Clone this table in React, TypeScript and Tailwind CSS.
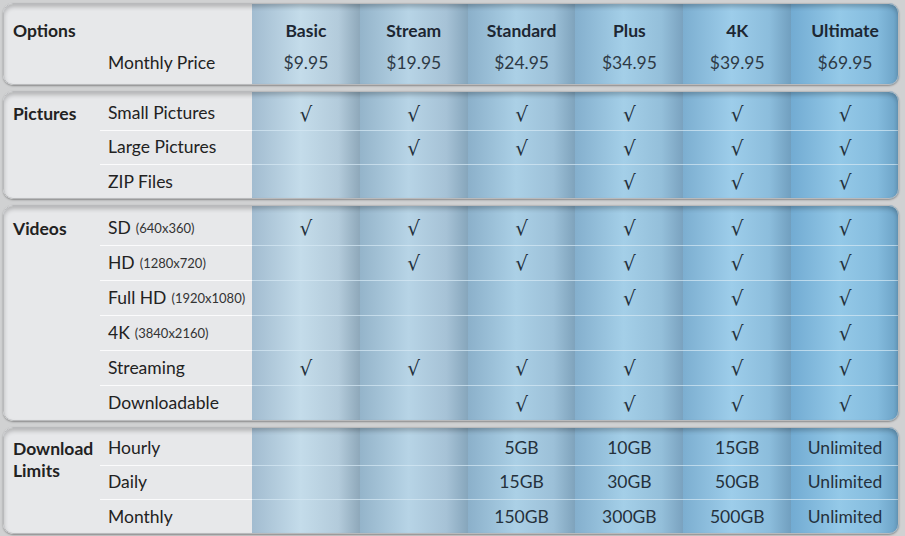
import React from 'react';

type Col = { name: string; price: string; bg: string };

const COLS: Col[] = [
  { name: 'Basic', price: '$9.95', bg: 'bg-[linear-gradient(to_right,#a2bcd0_0%,#c4dcea_45%,#b3cbdb_80%,#8ea8ba_100%)]' },
  { name: 'Stream', price: '$19.95', bg: 'bg-[linear-gradient(to_right,#94b4ca_0%,#b7d4e6_45%,#a6c2d6_80%,#86a6bc_100%)]' },
  { name: 'Standard', price: '$24.95', bg: 'bg-[linear-gradient(to_right,#8bb0ca_0%,#abd0e6_45%,#9cc0d8_80%,#7fa3bc_100%)]' },
  { name: 'Plus', price: '$34.95', bg: 'bg-[linear-gradient(to_right,#84afcd_0%,#a4cfe8_45%,#94bfda_80%,#7aa2bf_100%)]' },
  { name: '4K', price: '$39.95', bg: 'bg-[linear-gradient(to_right,#7caed0_0%,#9dcdea_45%,#8cbddc_80%,#719fbf_100%)]' },
  { name: 'Ultimate', price: '$69.95', bg: 'bg-[linear-gradient(to_right,#72abd2_0%,#94c9e8_45%,#84bbdd_80%,#6aa0c4_100%)]' },
];

type Row = { label: string; note?: string; cells: string[] };
type Group = { title: string[]; rows: Row[]; h: string; pt: string; tpt: string };

const Y = '√';

const GROUPS: Group[] = [
  {
    title: ['Pictures'],
    h: 'h-[34px]',
    pt: 'pt-[6px]',
    tpt: 'pt-[12px]',
    rows: [
      { label: 'Small Pictures', cells: [Y, Y, Y, Y, Y, Y] },
      { label: 'Large Pictures', cells: ['', Y, Y, Y, Y, Y] },
      { label: 'ZIP Files', cells: ['', '', '', Y, Y, Y] },
    ],
  },
  {
    title: ['Videos'],
    h: 'h-[35px]',
    pt: 'pt-[6px]',
    tpt: 'pt-[13px]',
    rows: [
      { label: 'SD', note: '(640x360)', cells: [Y, Y, Y, Y, Y, Y] },
      { label: 'HD', note: '(1280x720)', cells: ['', Y, Y, Y, Y, Y] },
      { label: 'Full HD', note: '(1920x1080)', cells: ['', '', '', Y, Y, Y] },
      { label: '4K', note: '(3840x2160)', cells: ['', '', '', '', Y, Y] },
      { label: 'Streaming', cells: [Y, Y, Y, Y, Y, Y] },
      { label: 'Downloadable', cells: ['', '', Y, Y, Y, Y] },
    ],
  },
  {
    title: ['Download', 'Limits'],
    h: 'h-[34px]',
    pt: 'pt-[5px]',
    tpt: 'pt-[11px]',
    rows: [
      { label: 'Hourly', cells: ['', '', '5GB', '10GB', '15GB', 'Unlimited'] },
      { label: 'Daily', cells: ['', '', '15GB', '30GB', '50GB', 'Unlimited'] },
      { label: 'Monthly', cells: ['', '', '150GB', '300GB', '500GB', 'Unlimited'] },
    ],
  },
];

const Section = ({ children, className = '' }: { children: React.ReactNode; className?: string }) => (
  <div className={`relative flex rounded-[10px] overflow-hidden shadow-[0_1px_2px_rgba(0,0,0,0.35)] ${className}`}>
    {children}
    <div className="pointer-events-none absolute inset-0 rounded-[10px] border border-[#b9babc] shadow-[inset_0_3px_4px_rgba(0,0,0,0.22)]" />
  </div>
);

const App = () => {
  return (
    <div
      className="w-[905px] h-[536px] bg-[#d0d1d2] pt-[3px] pl-[3px] pr-[6px] flex flex-col gap-[6px] text-[#222]"
      style={{ fontFamily: 'Lato, "Open Sans", sans-serif' }}
    >
      {/* header */}
      <Section className="h-[82px] shrink-0">
        <div className="w-[249px] bg-[#e7e8ea] flex">
          <div className="w-[97px] pl-[10px] pt-[15px] text-[17.5px] leading-[26px] font-bold">Options</div>
          <div className="flex-1 pt-[47px] pl-[8px] text-[17.5px] leading-[26px]">Monthly Price</div>
        </div>
        <div className="flex-1 flex">
          {COLS.map((c) => (
            <div key={c.name} className={`flex-1 flex flex-col items-center ${c.bg}`}>
              <div className="pt-[15px] h-[47px] text-[17.5px] leading-[26px] font-bold text-[#1d2733]">{c.name}</div>
              <div className="h-[35px] text-[17.5px] leading-[26px] text-[#2e3a46]">{c.price}</div>
            </div>
          ))}
        </div>
      </Section>

      {GROUPS.map((g) => (
        <Section key={g.title.join(' ')} className="shrink-0">
          <div className="w-[249px] bg-[#e7e8ea] flex">
            <div className={`w-[97px] pl-[10px] ${g.tpt} text-[17.5px] leading-[22px] font-bold`}>
              {g.title.map((t) => (
                <div key={t}>{t}</div>
              ))}
            </div>
            <div className={`flex-1 ${g.pt}`}>
              {g.rows.map((r, i) => (
                <div
                  key={r.label}
                  className={`${g.h} pl-[8px] flex items-center text-[17.5px] ${i < g.rows.length - 1 ? 'border-b border-[#fbfbfc]' : ''}`}
                >
                  {r.label}
                  {r.note && <span className="ml-[5px] text-[13px] text-[#333] mt-[2px]">{r.note}</span>}
                </div>
              ))}
            </div>
          </div>
          <div className="flex-1 flex">
            {COLS.map((c, ci) => (
              <div key={c.name} className={`flex-1 ${g.pt} ${c.bg}`}>
                {g.rows.map((r, i) => (
                  <div
                    key={r.label}
                    className={`${g.h} flex items-center justify-center ${i < g.rows.length - 1 ? 'border-b border-[#d6e8f3]/70' : ''}`}
                  >
                    {r.cells[ci] === Y ? (
                      <span className="text-[20px] text-[#24313d]" style={{ fontFamily: '"DejaVu Serif", serif' }}>
                        {Y}
                      </span>
                    ) : (
                      <span className="text-[17.5px] text-[#25313c]">{r.cells[ci]}</span>
                    )}
                  </div>
                ))}
              </div>
            ))}
          </div>
        </Section>
      ))}
    </div>
  );
};

export default App;
